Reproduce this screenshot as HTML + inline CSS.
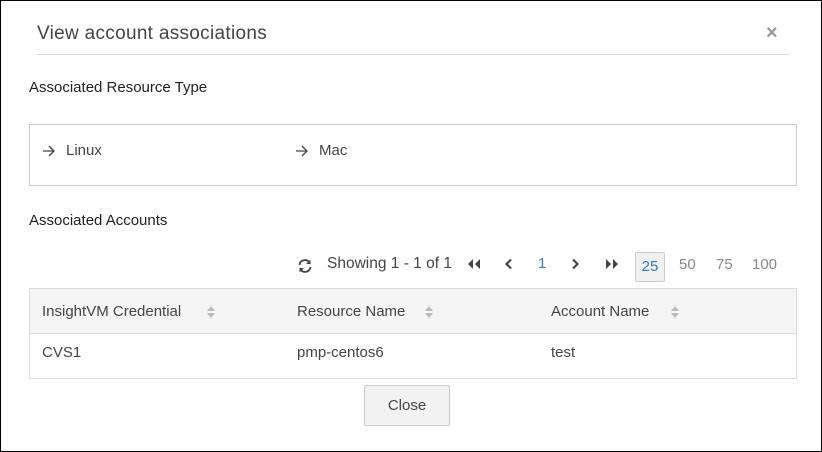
<!DOCTYPE html><html><head><style>
body{margin:0;width:822px;height:452px;overflow:hidden;font-family:"Liberation Sans",sans-serif;color:#333;}
.frame{position:absolute;left:0;top:0;width:820px;height:450px;border:1px solid #000;background:#fff}
.a{position:absolute;white-space:nowrap}
.s{position:absolute}
</style></head><body><div class="frame">
<div class="a" style="left:36px;top:22px;font-size:19px;color:#444;letter-spacing:0.3px">View account associations</div>
<div class="a" style="left:765px;top:21px;font-size:20px;color:#999;font-weight:bold">×</div>
<div class="a" style="left:36px;top:53px;width:752px;height:1px;background:#ddd"></div>
<div class="a" style="left:28px;top:78px;font-size:15px;color:#222">Associated Resource Type</div>
<div class="a" style="left:28px;top:123px;width:766px;height:60px;border:1px solid #ccc"></div>
<svg class="s" style="left:41px;top:144px" width="14" height="12"><path d="M1 6H12M7 1L12 6L7 11" stroke="#444" stroke-width="1.3" fill="none"/></svg>
<div class="a" style="left:65px;top:141px;font-size:15px;color:#444">Linux</div>
<svg class="s" style="left:294px;top:144px" width="14" height="12"><path d="M1 6H12M7 1L12 6L7 11" stroke="#444" stroke-width="1.3" fill="none"/></svg>
<div class="a" style="left:318px;top:141px;font-size:15px;color:#444">Mac</div>
<div class="a" style="left:28px;top:211px;font-size:15px;color:#222">Associated Accounts</div>
<svg class="s" style="left:296px;top:257px" width="16" height="16" viewBox="0 0 16 16"><path d="M2.5 7A5.5 5.5 0 0 1 12.5 4.5M13.5 9A5.5 5.5 0 0 1 3.5 11.5" stroke="#444" stroke-width="1.8" fill="none"/><path d="M13.5 1.5V6H9Z M2.5 14.5V10H7Z" fill="#444"/></svg>
<div class="a" style="left:326px;top:254px;font-size:15.5px;color:#444">Showing 1 - 1 of 1</div>
<svg class="s" style="left:465px;top:257px" width="16" height="12"><path d="M7 1L2 6L7 11ZM14 1L9 6L14 11Z" fill="#444"/></svg>
<svg class="s" style="left:502px;top:257px" width="10" height="12"><path d="M8 1.5L3.5 6L8 10.5" stroke="#444" stroke-width="2.2" fill="none"/></svg>
<div class="a" style="left:537px;top:254px;font-size:15px;color:#337ab7">1</div>
<svg class="s" style="left:570px;top:257px" width="10" height="12"><path d="M2 1.5L6.5 6L2 10.5" stroke="#444" stroke-width="2.2" fill="none"/></svg>
<svg class="s" style="left:603px;top:257px" width="16" height="12"><path d="M2 1L7 6L2 11ZM9 1L14 6L9 11Z" fill="#444"/></svg>
<div class="a" style="left:634px;top:251px;width:28px;height:28px;border:1px solid #ccc;border-radius:2px;background:#f0f0f0;font-size:15px;color:#337ab7;text-align:center;line-height:28px">25</div>
<div class="a" style="left:678px;top:255px;font-size:15px;color:#888">50</div>
<div class="a" style="left:715px;top:255px;font-size:15px;color:#888">75</div>
<div class="a" style="left:751px;top:255px;font-size:15px;color:#888">100</div>
<div class="a" style="left:28px;top:287px;width:766px;height:89px;border:1px solid #ddd"></div>
<div class="a" style="left:29px;top:288px;width:766px;height:44px;background:#f5f5f5;border-bottom:1px solid #ddd"></div>
<div class="a" style="left:41px;top:302px;font-size:15px;color:#444">InsightVM Credential</div>
<div class="a" style="left:296px;top:302px;font-size:15px;color:#444">Resource Name</div>
<div class="a" style="left:550px;top:302px;font-size:15px;color:#444">Account Name</div>
<svg class="s" style="left:205px;top:304px" width="10" height="14"><path d="M1 6L5 1L9 6ZM1 8L5 13L9 8Z" fill="#bbb"/></svg>
<svg class="s" style="left:423px;top:304px" width="10" height="14"><path d="M1 6L5 1L9 6ZM1 8L5 13L9 8Z" fill="#bbb"/></svg>
<svg class="s" style="left:669px;top:304px" width="10" height="14"><path d="M1 6L5 1L9 6ZM1 8L5 13L9 8Z" fill="#bbb"/></svg>
<div class="a" style="left:41px;top:343px;font-size:15px;color:#444">CVS1</div>
<div class="a" style="left:296px;top:343px;font-size:15px;color:#444">pmp-centos6</div>
<div class="a" style="left:550px;top:343px;font-size:15px;color:#444">test</div>
<div class="a" style="left:363px;top:384px;width:84px;height:39px;border:1px solid #ccc;border-radius:2px;background:#f2f2f2;font-size:15px;color:#444;text-align:center;line-height:39px">Close</div>
</div></body></html>
